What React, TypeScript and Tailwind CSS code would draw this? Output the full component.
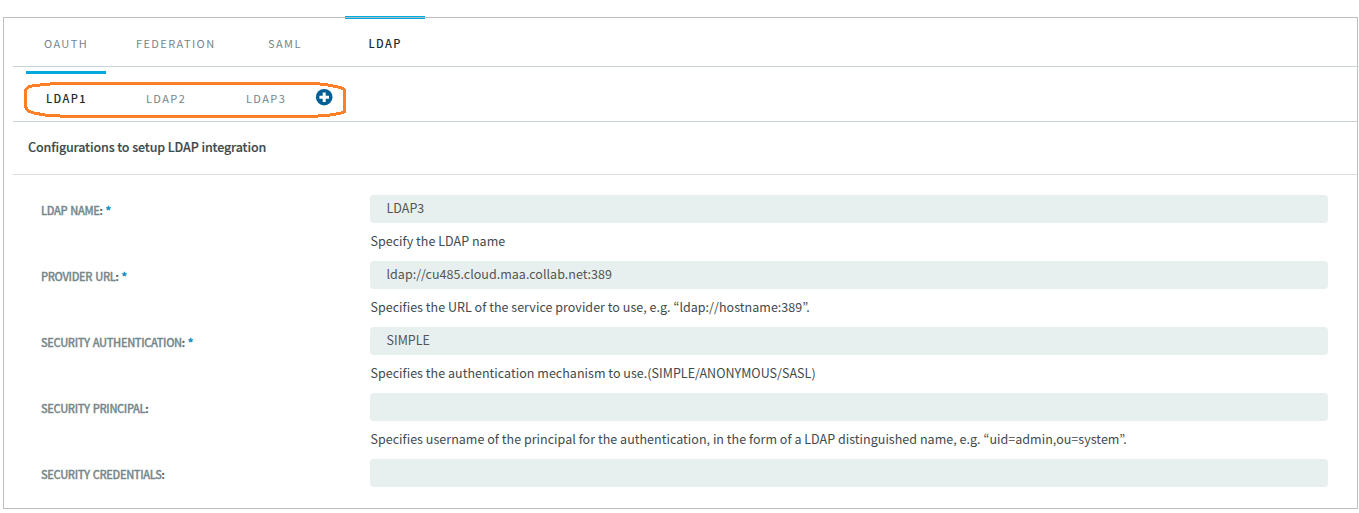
import React from "react";

type Tab = { label: string; active?: boolean; className: string };

const mainTabs: Tab[] = [
  { label: "OAUTH", className: "ml-[31px] w-[92px]" },
  { label: "FEDERATION", className: "w-[132px]" },
  { label: "SAML", className: "w-[77px]" },
  { label: "LDAP", active: true, className: "w-[80px]" },
];

const subTabs: Tab[] = [
  { label: "LDAP1", active: true, className: "ml-[13px] w-[80px]" },
  { label: "LDAP2", className: "ml-[40px] w-[60px]" },
  { label: "LDAP3", className: "ml-[40px] w-[60px]" },
];

type Field = { label: string; required?: boolean; value: string; help?: string };

const fields: Field[] = [
  { label: "LDAP NAME", required: true, value: "LDAP3", help: "Specify the LDAP name" },
  {
    label: "PROVIDER URL",
    required: true,
    value: "ldap://cu485.cloud.maa.collab.net:389",
    help: "Specifies the URL of the service provider to use, e.g. “ldap://hostname:389”.",
  },
  {
    label: "SECURITY AUTHENTICATION",
    required: true,
    value: "SIMPLE",
    help: "Specifies the authentication mechanism to use.(SIMPLE/ANONYMOUS/SASL)",
  },
  {
    label: "SECURITY PRINCIPAL",
    value: "",
    help: "Specifies username of the principal for the authentication, in the form of a LDAP distinguished name, e.g. “uid=admin,ou=system”.",
  },
  { label: "SECURITY CREDENTIALS", value: "" },
];

function MainTabs() {
  return (
    <nav className="-mt-[2px] flex h-[51px] w-[1346px] border-b border-[#c9d4d3] text-[11px] leading-[20px] tracking-[1.4px]">
      {mainTabs.map((t) => (
        <div key={t.label} className={`${t.className} whitespace-nowrap`}>
          {t.active ? (
            <>
              <div className="h-[3px] bg-[#00aadd] pt-px">
                <div className="h-px bg-[#a9bcc4]" />
              </div>
              <div className="pt-[14px] pl-[23.5px] font-medium text-[#1b2a2c]">{t.label}</div>
            </>
          ) : (
            <div className="pt-[17px] text-[#75858a]">{t.label}</div>
          )}
        </div>
      ))}
    </nav>
  );
}

function AddIcon() {
  return (
    <svg className="mt-[17px] block h-[18px] w-[18px]" viewBox="0 0 18 18">
      <circle cx="9.2" cy="9.2" r="8.3" fill="#005f96" />
      <path d="M7.7 4.4h3v3.3h3.3v3h-3.3V14h-3v-3.3H4.4v-3h3.3z" fill="#fff" />
    </svg>
  );
}

function SubTabs() {
  return (
    <nav className="relative flex h-[55px] w-[1344px] border-b border-[#c9d4d3] pt-[4px] text-[11px] leading-[20px] tracking-[1.4px]">
      {subTabs.map((t) => (
        <div key={t.label} className={`${t.className} whitespace-nowrap`}>
          {t.active ? (
            <>
              <div className="h-[3px] bg-[#00aadd]" />
              <div className="pt-[14px] pl-[20px] font-medium text-[#1b2a2c]">{t.label}</div>
            </>
          ) : (
            <div className="pt-[17px] text-[#75858a]">{t.label}</div>
          )}
        </div>
      ))}
      <div className="ml-[9px]">
        <AddIcon />
      </div>
      <svg className="absolute left-[11px] top-[14px] h-[38px] w-[323px]" viewBox="24 81 323 38" fill="none" shapeRendering="crispEdges">
        <path
          d="M56 83.5H312L320 84L328 85L338 87L343 88.5L344.3 90V112L339 113.5L330 115L318 116L304 116.5H65L55 115.5L45 115L34 113L28 111L25.5 107V90L29 86.5L35 85.5L45 84.5Z"
          stroke="#ff7f27"
          strokeWidth="3"
          strokeLinejoin="round"
        />
      </svg>
    </nav>
  );
}

function FieldRow({ field }: { field: Field }) {
  return (
    <div className="flex h-[66px]">
      <div className="w-[329px] pt-[5px] text-[11px] font-medium leading-[20px] tracking-[-0.36px] text-[#75878a] [word-spacing:1px] [-webkit-text-stroke:0.3px_currentColor]">
        {field.label}
        <span className="text-[#4b5b5e]">:</span>
        {field.required && <span className="ml-[3px] font-bold text-[#0a8fc4]">*</span>}
      </div>
      <div className="w-[958px]">
        <div className="h-[28px] rounded-[4px] bg-[#e7f0ee] pl-[16.5px] text-[12.5px] leading-[26px] tracking-[0.02px] text-[#555]">{field.value}</div>
        <div className="whitespace-nowrap pt-[8px] pl-[0.5px] text-[12.5px] leading-[20px] tracking-[0.03px] text-[#3f4a4d]">{field.help}</div>
      </div>
    </div>
  );
}

export default function App() {
  return (
    <div className="h-[513px] overflow-hidden bg-white pt-[17px] pl-[3px] font-['Noto_Sans_CJK_KR','Noto_Sans',sans-serif]">
      <main className="h-[492px] w-[1355px] border border-[#bfbfbf] pl-[9px]">
        <MainTabs />
        <SubTabs />
        <h1 className="h-[53px] w-[1344px] border-b border-[#d9dede] pt-[14px] pl-[15px] text-[12.5px] font-medium leading-[22px] tracking-[-0.12px] text-[#3b4a4b] [-webkit-text-stroke:0.15px_currentColor]">
          Configurations to setup LDAP integration
        </h1>
        <form className="pt-[20px] pl-[28px]">
          {fields.map((f) => (
            <FieldRow key={f.label} field={f} />
          ))}
        </form>
      </main>
    </div>
  );
}
